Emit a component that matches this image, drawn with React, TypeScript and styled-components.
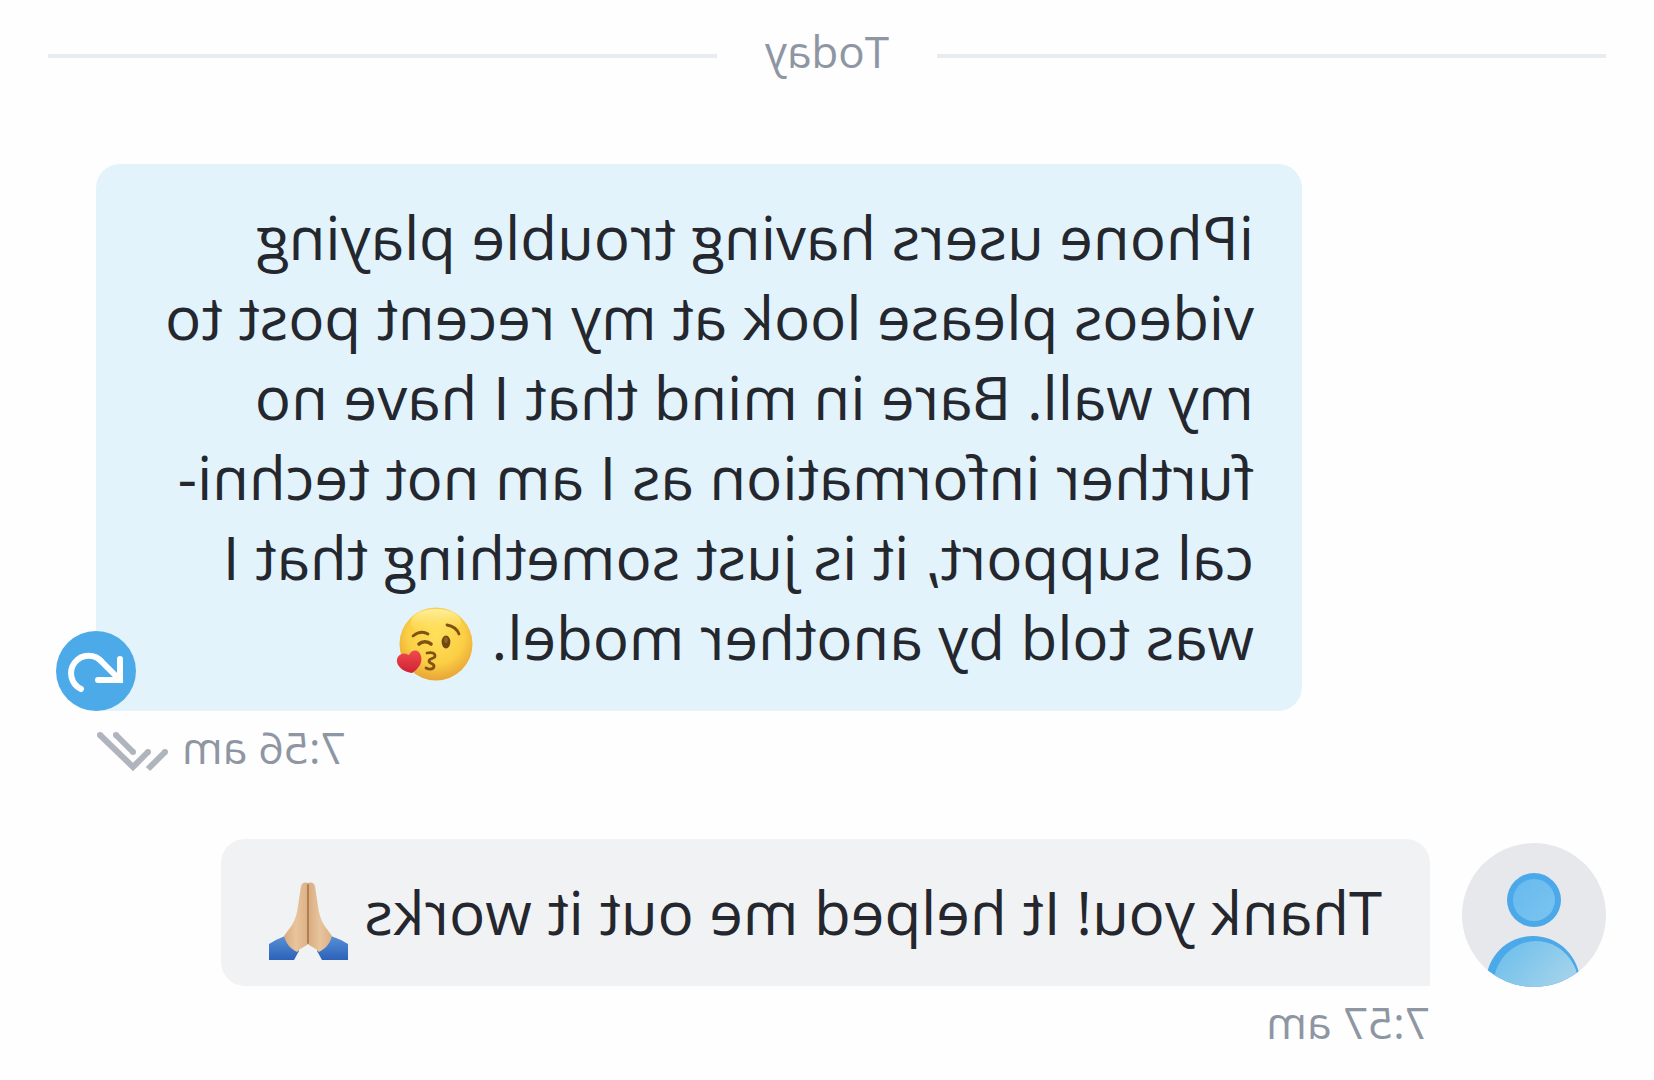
import React from "react";
import styled, { createGlobalStyle } from "styled-components";

const GlobalStyle = createGlobalStyle`
  body {
    margin: 0;
    background: #fefefe;
    overflow-x: hidden;
  }
`;

/* The whole conversation is shown as a mirror image. */
const Conversation = styled.main`
  box-sizing: border-box;
  min-height: 100vh;
  padding: 21px 48px 24px;
  transform: scaleX(-1);
  background: #fefefe;
  color: #25272e;
  font-family: "Open Sans", "Noto Sans", sans-serif;
`;

const DayDivider = styled.div`
  display: flex;
  align-items: center;
  gap: 48px;
  margin-bottom: 73px;

  &::before,
  &::after {
    content: "";
    flex: 1;
    height: 4px;
    background: #e8ebef;
  }
`;

const DayLabel = styled.span`
  padding-bottom: 10px;
  color: #8f96a3;
  font-size: 44px;
  line-height: 60px;
`;

const Message = styled.article<{ $own?: boolean }>`
  display: flex;
  justify-content: ${(p) => (p.$own ? "flex-end" : "flex-start")};
  align-items: flex-start;
  gap: 32px;
  padding-right: ${(p) => (p.$own ? "48px" : "0")};
  margin-bottom: ${(p) => (p.$own ? "62px" : "0")};
`;

const Content = styled.div<{ $own?: boolean }>`
  display: flex;
  flex-direction: column;
  align-items: ${(p) => (p.$own ? "flex-end" : "flex-start")};
  gap: 6px;
`;

const Bubble = styled.div<{ $own?: boolean }>`
  position: relative;
  box-sizing: border-box;
  max-width: ${(p) => (p.$own ? "1206px" : "none")};
  padding: 33px 48px 34px;
  border-radius: ${(p) => (p.$own ? "24px 24px 0 24px" : "24px 24px 24px 0")};
  background: ${(p) => (p.$own ? "#e2f3fc" : "#f1f2f4")};
`;

const Text = styled.p`
  margin: 0;
  font-size: 60px;
  line-height: 80px;
`;

const Emoji = styled.svg`
  width: 80px;
  height: 80px;
  margin: -16px 0;
  vertical-align: -9px;
`;

const ResendButton = styled.button`
  position: absolute;
  right: -40px;
  bottom: 0;
  width: 80px;
  height: 80px;
  padding: 0;
  border: 0;
  border-radius: 50%;
  background: #4daae9;
  cursor: pointer;

  svg {
    display: block;
  }
`;

const Meta = styled.div`
  display: flex;
  align-items: center;
  gap: 14px;
  color: #8f96a3;
  font-size: 44px;
  line-height: 60px;
`;

const Avatar = styled.svg`
  flex: none;
  width: 144px;
  height: 144px;
  margin-top: 4px;
`;

function KissEmoji() {
  return (
    <Emoji viewBox="0 0 80 80" role="img" aria-label="Face blowing a kiss">
      <defs>
        <radialGradient id="face" cx="50%" cy="38%" r="64%">
          <stop offset="0" stopColor="#ffe05a" />
          <stop offset="0.6" stopColor="#fbcf46" />
          <stop offset="1" stopColor="#e7a133" />
        </radialGradient>
        <linearGradient id="shine" x1="0" y1="0" x2="0" y2="1">
          <stop offset="0" stopColor="#fff0a0" />
          <stop offset="1" stopColor="#ffe45c" stopOpacity="0" />
        </linearGradient>
        <linearGradient id="heart" x1="0" y1="0" x2="0" y2="1">
          <stop offset="0" stopColor="#f04a4d" />
          <stop offset="1" stopColor="#cf2233" />
        </linearGradient>
      </defs>
      <circle cx="40" cy="39" r="36.5" fill="url(#face)" />
      <ellipse cx="40" cy="17" rx="25" ry="13" fill="url(#shine)" />
      <g fill="none" stroke="#805311" strokeWidth="2.8" strokeLinecap="round">
        <path d="M17 29c2-5 6-8 12-9" />
        <path d="M48 29c5-3 10-2 15 2" />
        <path d="M45 39c3-3 9-3 12 0" strokeWidth="3.6" />
        <path d="M49 48c-5-1-8 0-8 3s6 2 6 5-5 2-5 5 4 4 8 2" />
      </g>
      <ellipse cx="30" cy="37" rx="4.4" ry="6.4" fill="#704810" />
      <ellipse cx="30" cy="35" rx="1.8" ry="3" fill="#946522" />
      <path
        d="M64 68C58 64 53 58 55 51c2-7 9-7 12-1 6-4 13 0 12 7-1 6-8 10-15 11Z"
        fill="url(#heart)"
      />
    </Emoji>
  );
}

function PrayEmoji() {
  return (
    <Emoji viewBox="0 0 80 80" role="img" aria-label="Folded hands">
      <defs>
        <linearGradient id="skin" x1="0" y1="0" x2="1" y2="0">
          <stop offset="0" stopColor="#dcb085" />
          <stop offset="0.5" stopColor="#e8c49c" />
          <stop offset="1" stopColor="#d9ab80" />
        </linearGradient>
        <linearGradient id="sleeve" x1="0" y1="0" x2="0" y2="1">
          <stop offset="0" stopColor="#5790d8" />
          <stop offset="1" stopColor="#2d62b8" />
        </linearGradient>
      </defs>
      <path d="M1 64q8-5 17-8l14 15-5 9H1Z" fill="url(#sleeve)" />
      <path d="M80 64q-8-5-16-8L50 71l5 9h25Z" fill="url(#sleeve)" />
      <path
        d="M41 3c-2-1-6-1-7 3l-3 20c-1 8-3 14-6 19l-8 11c2 8 7 13 13 16 3-4 8-5 11-8Z"
        fill="url(#skin)"
      />
      <path
        d="M41 3c2-1 6-1 7 3l3 20c1 8 3 14 6 19l8 11c-2 8-7 13-13 16-3-4-8-5-11-8Z"
        fill="url(#skin)"
      />
      <path
        d="M41 5v58"
        fill="none"
        stroke="#b27f52"
        strokeWidth="2"
        strokeLinecap="round"
      />
    </Emoji>
  );
}

function ResendIcon() {
  return (
    <svg width="80" height="80" viewBox="0 0 80 80" aria-hidden="true">
      <g fill="none" stroke="#fff" strokeWidth="6" strokeLinecap="round">
        <path d="M16 28v21h22" strokeLinejoin="miter" />
        <path d="M16 49 34 31A17.5 17.5 0 1 1 55 58" />
      </g>
    </svg>
  );
}

function ReadTicks() {
  return (
    <svg width="72" height="52" viewBox="0 -11 72 52" role="img" aria-label="Read">
      <g fill="none" stroke="#b0b4bd" strokeWidth="6">
        <path d="M3 20 20 37" />
        <path d="M20 20 35 35 68 3" />
        <path d="M35 20 52 3" />
      </g>
      <g fill="#b0b4bd">
        <circle cx="3" cy="20" r="3" />
        <circle cx="20" cy="20" r="3" />
        <circle cx="35" cy="20" r="3" />
        <circle cx="68" cy="3" r="3" />
        <circle cx="52" cy="3" r="3" />
      </g>
    </svg>
  );
}

function UserAvatar() {
  return (
    <Avatar viewBox="0 0 144 144" role="img" aria-label="User avatar">
      <defs>
        <clipPath id="disc">
          <circle cx="72" cy="72" r="72" />
        </clipPath>
        <linearGradient id="head" x1="1" y1="0" x2="0" y2="1">
          <stop offset="0" stopColor="#67baf0" />
          <stop offset="1" stopColor="#7bc3ee" />
        </linearGradient>
        <linearGradient id="body" x1="1" y1="0" x2="0" y2="1">
          <stop offset="0.1" stopColor="#70c0ec" />
          <stop offset="0.7" stopColor="#a8d4ea" />
        </linearGradient>
      </defs>
      <g clipPath="url(#disc)">
        <rect width="144" height="144" fill="#e7e8ec" />
        <circle cx="72" cy="57" r="27" fill="#4ba9e9" />
        <circle cx="72" cy="57" r="21" fill="url(#head)" />
        <ellipse cx="73" cy="140" rx="47" ry="47" fill="#4ba9e9" />
        <ellipse cx="70" cy="144" rx="43" ry="46" fill="url(#body)" />
      </g>
    </Avatar>
  );
}

export default function App() {
  return (
    <>
      <GlobalStyle />
      <Conversation>
        <DayDivider>
          <DayLabel>Today</DayLabel>
        </DayDivider>

        <Message $own>
          <Content $own>
            <Bubble $own>
              <Text>
                iPhone users having trouble playing videos please look at my
                recent post to my wall. Bare in mind that I have no further
                information as I am not techni&shy;cal support, it is just
                something that I was told by another model. <KissEmoji />
              </Text>
              <ResendButton type="button" aria-label="Resend message">
                <ResendIcon />
              </ResendButton>
            </Bubble>
            <Meta>
              <time dateTime="07:56">7:56 am</time>
              <ReadTicks />
            </Meta>
          </Content>
        </Message>

        <Message>
          <UserAvatar />
          <Content>
            <Bubble>
              <Text>
                Thank you! It helped me out it works <PrayEmoji />
              </Text>
            </Bubble>
            <Meta>
              <time dateTime="07:57">7:57 am</time>
            </Meta>
          </Content>
        </Message>
      </Conversation>
    </>
  );
}
